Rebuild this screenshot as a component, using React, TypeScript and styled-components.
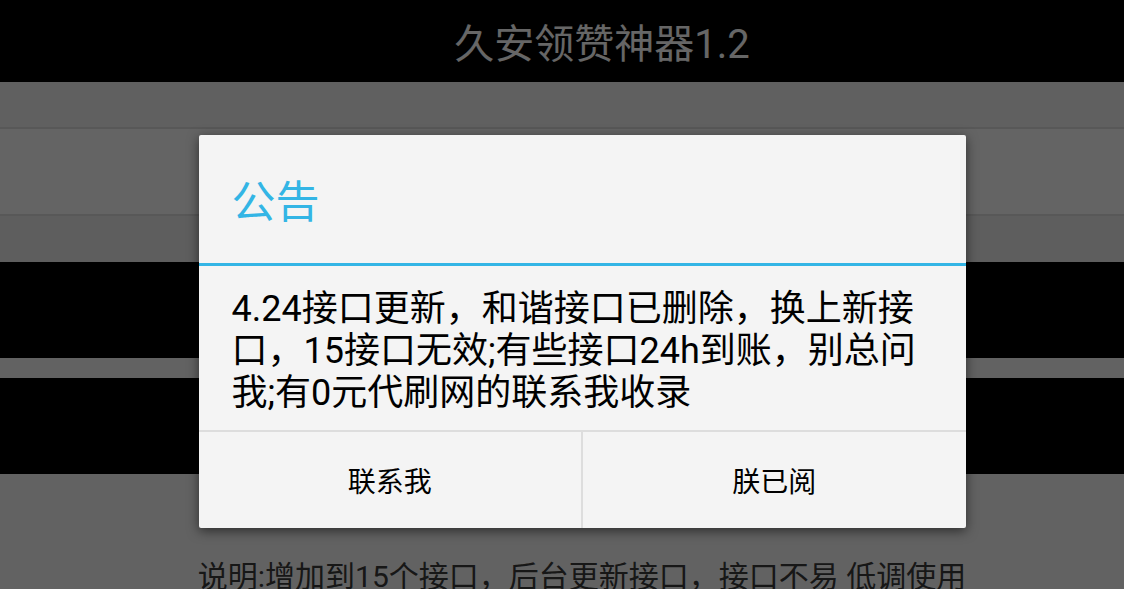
import styled, { createGlobalStyle } from "styled-components";

const GlobalStyle = createGlobalStyle`
  html, body {
    margin: 0;
    padding: 0;
    background: #000;
  }
  body {
    font-family: Roboto, "Noto Sans CJK SC", sans-serif;
  }
`;

const Screen = styled.div`
  position: relative;
  width: 1124px;
  height: 589px;
  overflow: hidden;
  background: #f6f6f6;
  display: flex;
  flex-direction: column;
`;

const ActionBar = styled.div`
  height: 82px;
  flex-shrink: 0;
  background: #000;
  color: #fff;
  display: flex;
  align-items: center;
  justify-content: center;
  padding-left: 80px;
  font-size: 40px;
`;

const ListRow = styled.div<{ $height: number; $shade: string }>`
  height: ${(p) => p.$height}px;
  flex-shrink: 0;
  background: ${(p) => p.$shade};
  border-bottom: 2px solid #dcdcdc;
  box-sizing: border-box;
`;

const Banner = styled.div<{ $height: number }>`
  height: ${(p) => p.$height}px;
  flex-shrink: 0;
  background: #000;
`;

const Spacer = styled.div<{ $height: number }>`
  height: ${(p) => p.$height}px;
  flex-shrink: 0;
`;

const Footnote = styled.div`
  margin-top: 83px;
  padding-left: 40px;
  text-align: center;
  font-size: 30px;
  line-height: 40px;
  color: #3a3a3a;
  white-space: nowrap;
`;

const Dim = styled.div`
  position: absolute;
  inset: 0;
  background: rgba(0, 0, 0, 0.6);
  display: flex;
  justify-content: center;
  align-items: flex-start;
  padding: 135px 0 0 40px;
`;

const Dialog = styled.div`
  width: 767px;
  height: 393px;
  background: #f4f4f4;
  border-radius: 2px;
  box-shadow: 0 3px 12px rgba(0, 0, 0, 0.55);
  display: flex;
  flex-direction: column;
  overflow: hidden;
`;

const TitleBar = styled.div`
  height: 128px;
  flex-shrink: 0;
  display: flex;
  align-items: center;
  padding-left: 33px;
  font-size: 44px;
  color: #33b5e5;
  border-bottom: 3px solid #33b5e5;
`;

const Message = styled.div`
  flex: 1;
  padding: 22px 33px 0;
  font-size: 36px;
  line-height: 42px;
  color: #000;
`;

const ButtonBar = styled.div`
  height: 96px;
  flex-shrink: 0;
  display: flex;
  border-top: 2px solid #dddddd;
`;

const DialogButton = styled.div`
  flex: 1;
  display: flex;
  align-items: center;
  justify-content: center;
  font-size: 28px;
  color: #000;
  & + & {
    border-left: 2px solid #dddddd;
  }
`;

export default function App() {
  return (
    <>
      <GlobalStyle />
      <Screen>
        <ActionBar>久安领赞神器1.2</ActionBar>
        <ListRow $height={47} $shade="#efefef" />
        <ListRow $height={87} $shade="#fafafa" />
        <Spacer $height={46} style={{ background: "#ececec" }} />
        <Banner $height={96} />
        <Spacer $height={20} />
        <Banner $height={96} />
        <Footnote>说明:增加到15个接口，后台更新接口，接口不易 低调使用</Footnote>
        <Dim>
          <Dialog>
            <TitleBar>公告</TitleBar>
            <Message>
              4.24接口更新，和谐接口已删除，换上新接口，15接口无效;有些接口24h到账，别总问我;有0元代刷网的联系我收录
            </Message>
            <ButtonBar>
              <DialogButton>联系我</DialogButton>
              <DialogButton>朕已阅</DialogButton>
            </ButtonBar>
          </Dialog>
        </Dim>
      </Screen>
    </>
  );
}
